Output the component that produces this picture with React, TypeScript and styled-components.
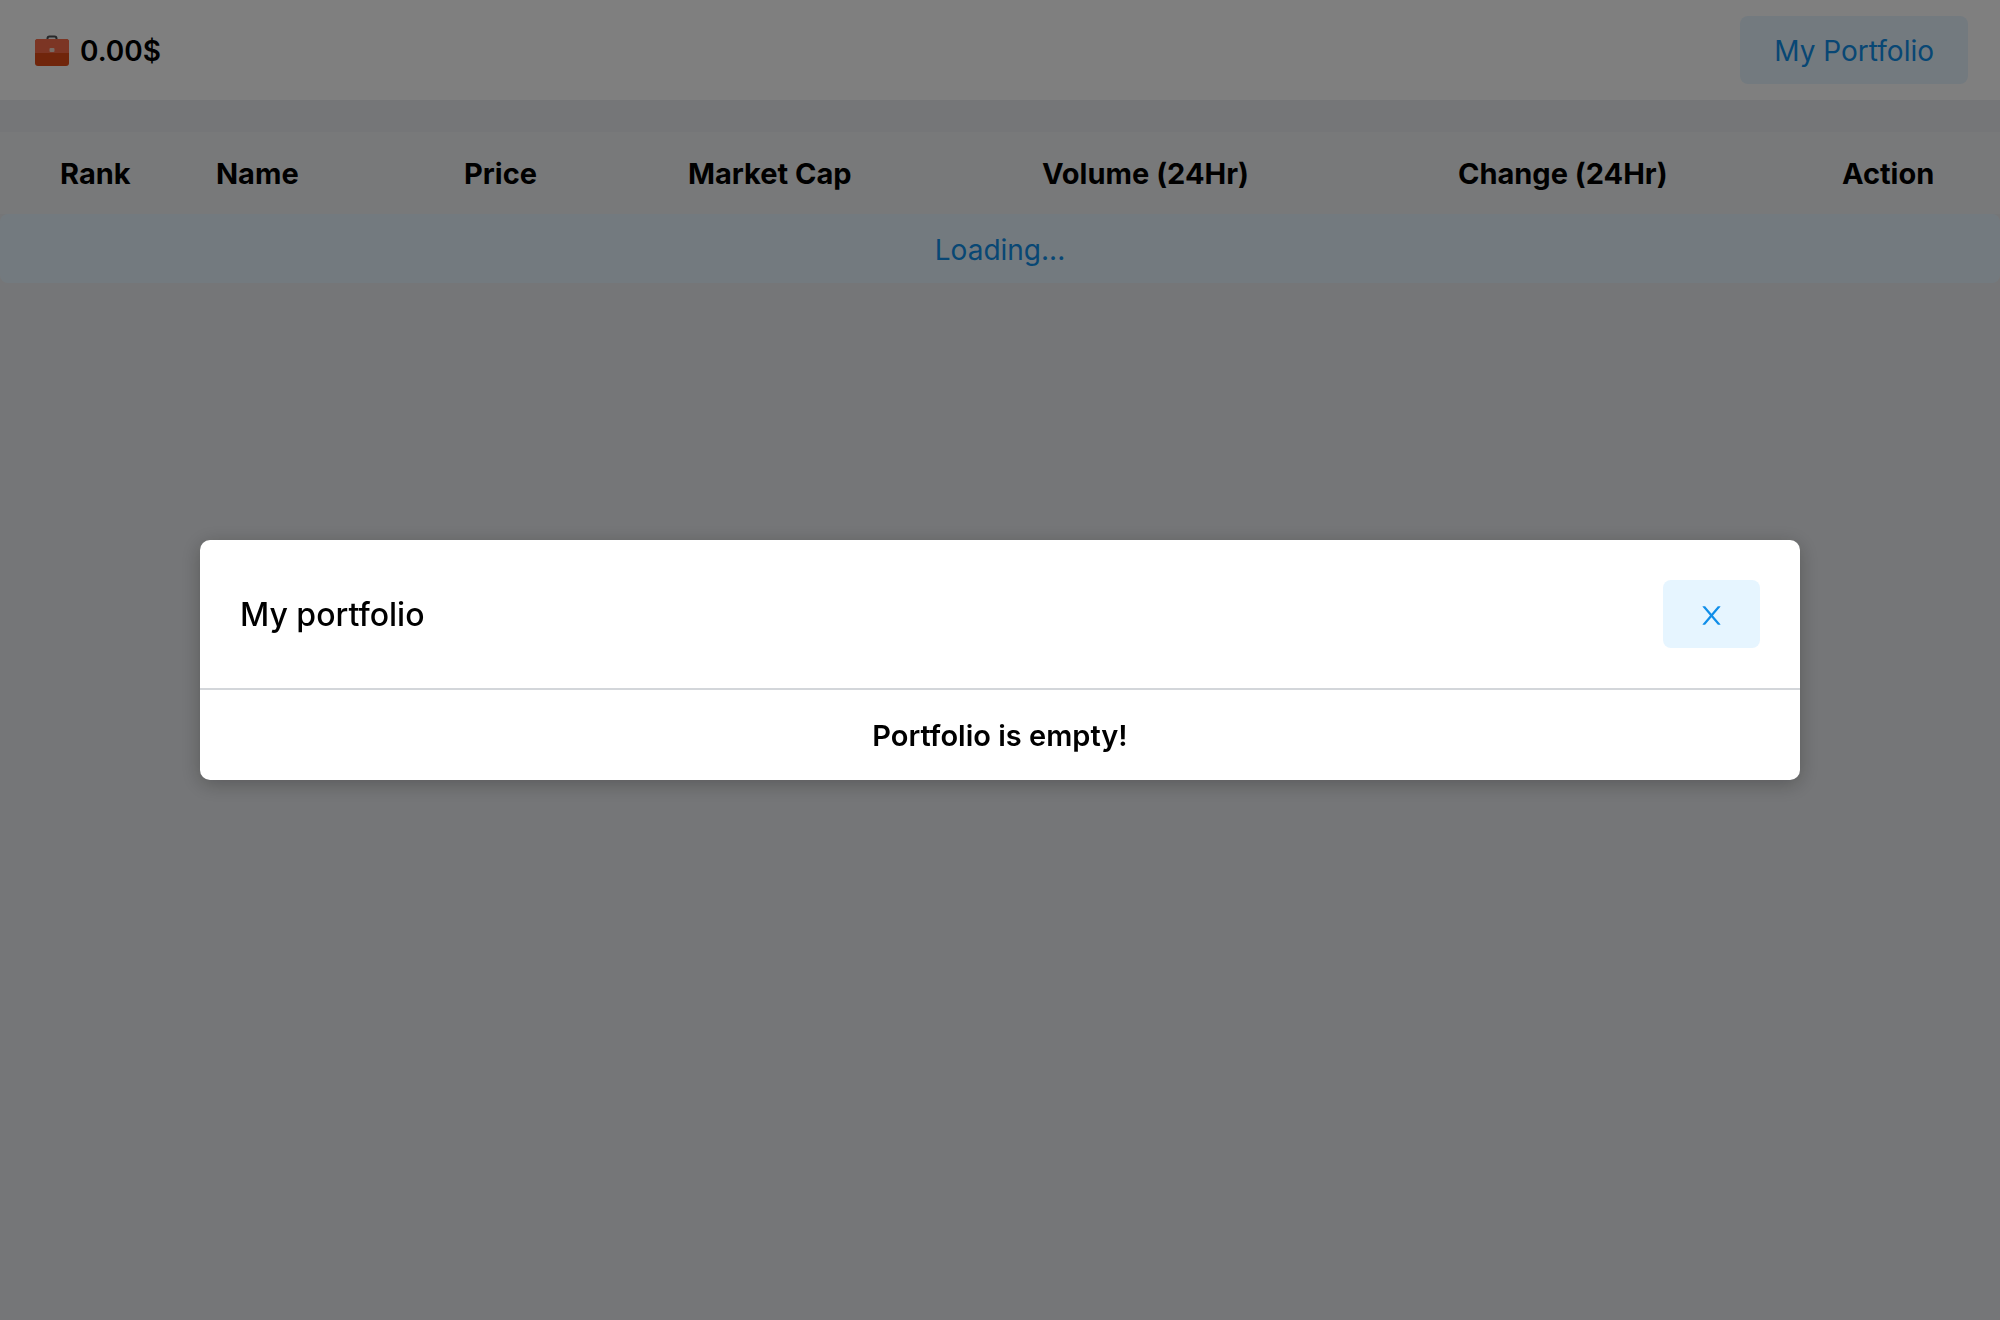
import React from "react";
import styled, { createGlobalStyle } from "styled-components";

const GlobalStyle = createGlobalStyle`
  *, *::before, *::after { box-sizing: border-box; }
  body {
    margin: 0;
    background: #ebedf0;
    color: #000;
    font-family: Inter, Roboto, "Liberation Sans", sans-serif;
    font-size: 28px;
    line-height: 36px;
    font-variant-ligatures: none;
  }
`;

const Header = styled.header`
  display: flex;
  align-items: center;
  justify-content: space-between;
  padding: 16px 32px 16px 34px;
  background: #fff;
`;

const Balance = styled.div`
  display: flex;
  align-items: center;
  gap: 10px;
  padding-top: 2px;
  font-weight: 600;
`;

const BriefcaseIcon = styled.svg`
  width: 36px;
  height: 32px;
`;

const Button = styled.button`
  display: flex;
  align-items: center;
  justify-content: center;
  min-height: 68px;
  padding: 17px 34px 15px;
  border: 0;
  border-radius: 8px;
  background: #e6f5ff;
  color: #108ee9;
  font: inherit;
  cursor: pointer;
`;

const Main = styled.main`
  margin-top: 32px;
`;

const CoinTable = styled.table`
  width: 100%;
  table-layout: fixed;
  border-collapse: collapse;
  background: #f0f2f4;
`;

const HeadCell = styled.th<{ $width: string }>`
  width: ${(p) => p.$width};
  padding: 24px 0 22px 60px;
  font-size: 29px;
  font-weight: 700;
  text-align: left;
  white-space: nowrap;
`;

const Loading = styled.div`
  padding: 18px 16px 15px;
  border-radius: 8px;
  background: #e6f5ff;
  color: #108ee9;
  text-align: center;
`;

const Overlay = styled.div`
  position: fixed;
  inset: 0;
  display: flex;
  align-items: center;
  justify-content: center;
  background: rgba(0, 0, 0, 0.5);
`;

const Modal = styled.section`
  width: 80%;
  border-radius: 10px;
  background: #fff;
  box-shadow: 0 4px 20px rgba(0, 0, 0, 0.25);
`;

const ModalHeader = styled.div`
  display: flex;
  align-items: center;
  justify-content: space-between;
  padding: 40px;
  border-bottom: 2px solid #d3d6da;
`;

const ModalTitle = styled.h2`
  margin: 0;
  padding-top: 2px;
  font-size: 32px;
  font-weight: 500;
`;

const EmptyText = styled.p`
  margin: 0;
  padding: 28px 27px 26px;
  font-size: 29px;
  font-weight: 600;
  text-align: center;
`;

const columns = [
  { title: "Rank", width: "7.8%" },
  { title: "Name", width: "12.4%" },
  { title: "Price", width: "11.2%" },
  { title: "Market Cap", width: "17.7%" },
  { title: "Volume (24Hr)", width: "20.8%" },
  { title: "Change (24Hr)", width: "19.2%" },
  { title: "Action", width: "10.9%" },
];

const Briefcase = () => (
  <BriefcaseIcon viewBox="0 0 36 32" aria-hidden="true">
    <path d="M13.5 5V3.5Q13.5 1.5 15.5 1.5H20.5Q22.5 1.5 22.5 3.5V5" fill="none" stroke="#4e5054" strokeWidth="2" />
    <rect x="1" y="4" width="34" height="27" rx="3" fill="#e04a16" />
    <path d="M1 18V7Q1 4 4 4H32Q35 4 35 7V18Z" fill="#f96a48" />
    <rect x="15.5" y="13" width="5" height="4" rx="1" fill="#f0d8cc" />
  </BriefcaseIcon>
);

const CloseIcon = () => (
  <svg width="29" height="29" viewBox="0 0 1024 1024" fill="currentColor" aria-hidden="true">
    <path d="M563.8 512l262.5-312.9c4.4-5.2.7-13.1-6.1-13.1h-79.8c-4.7 0-9.2 2.1-12.3 5.7L511.6 449.8 295.1 191.7c-3-3.6-7.5-5.7-12.3-5.7H203c-6.8 0-10.5 7.9-6.1 13.1L459.4 512 196.9 824.9A7.95 7.95 0 0 0 203 838h79.8c4.7 0 9.2-2.1 12.3-5.7l216.5-258.1 216.5 258.1c3 3.6 7.5 5.7 12.3 5.7h79.8c6.8 0 10.5-7.9 6.1-13.1L563.8 512z" />
  </svg>
);

export default function App() {
  const [open, setOpen] = React.useState(true);

  return (
    <>
      <GlobalStyle />
      <Header>
        <Balance>
          <Briefcase />
          <span>0.00$</span>
        </Balance>
        <Button type="button" onClick={() => setOpen(true)}>My Portfolio</Button>
      </Header>
      <Main>
        <CoinTable>
          <thead>
            <tr>
              {columns.map((c) => (
                <HeadCell key={c.title} scope="col" $width={c.width}>{c.title}</HeadCell>
              ))}
            </tr>
          </thead>
        </CoinTable>
        <Loading role="status">Loading...</Loading>
      </Main>
      {open && (
        <Overlay>
          <Modal role="dialog" aria-modal="true" aria-labelledby="portfolio-title">
            <ModalHeader>
              <ModalTitle id="portfolio-title">My portfolio</ModalTitle>
              <Button type="button" aria-label="Close" onClick={() => setOpen(false)}>
                <CloseIcon />
              </Button>
            </ModalHeader>
            <EmptyText>Portfolio is empty!</EmptyText>
          </Modal>
        </Overlay>
      )}
    </>
  );
}
